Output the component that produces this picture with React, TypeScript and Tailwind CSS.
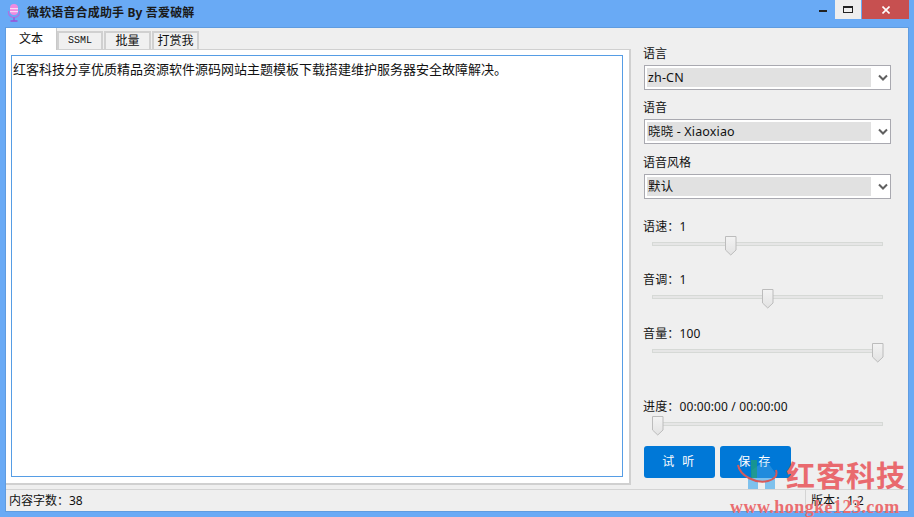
const font = "font-['Noto_Sans','Noto_Sans_CJK_SC',sans-serif]";

const tabs = [
  { label: "SSML", width: "w-[46px]", mono: true },
  { label: "批量", width: "w-[47px]", mono: false },
  { label: "打赏我", width: "w-[47px]", mono: false },
];

function MicIcon() {
  return (
    <svg width="14" height="18" viewBox="0 0 14 18">
      <rect x="3" y="0" width="8" height="11" rx="4" fill="#f08ae0" />
      <rect x="3" y="4" width="8" height="1.2" fill="#fbd8f5" />
      <rect x="3" y="7" width="8" height="1.2" fill="#fbd8f5" />
      <path d="M1.5 7v1.5a5.5 5 0 0 0 11 0V7" fill="none" stroke="#b070e0" strokeWidth="1.2" />
      <path d="M7 13.5V17M3.5 17h7" stroke="#9a50d8" strokeWidth="1.3" fill="none" />
    </svg>
  );
}

function SelectBox({ label, value, top }: { label: string; value: string; top: string }) {
  return (
    <div className={`flex flex-col ${top}`}>
      <div className="h-[20px] text-[12px] leading-[18px] text-[#111]">{label}</div>
      <div className="ml-px flex h-[25px] w-[247px] items-center border border-[#a9a9b0] bg-white pl-[2px]">
        <div className="h-[19px] w-[224px] bg-[#e1e1e1] pl-px text-[12.5px] leading-[19px] tracking-[0.15px] text-[#111]">{value}</div>
        <svg width="10" height="8" viewBox="0 0 10 8" className="ml-[7px]">
          <path d="M1 1.5l4 4 4-4" fill="none" stroke="#606060" strokeWidth="2" />
        </svg>
      </div>
    </div>
  );
}

function Slider({ label, offset, gap }: { label: string; offset: number; gap: string }) {
  return (
    <div className={`flex flex-col ${gap}`}>
      <div className="h-[18px] text-[12px] leading-[18px] tracking-[0.13px] text-[#111]">{label}</div>
      <div className="relative ml-[9px] mt-[6px] h-[4px] w-[231px] border border-[#d6d9d6] bg-[#e6e6e6]">
        <svg
          width="12"
          height="20"
          viewBox="0 0 12 20"
          className="absolute top-[-7px]"
          style={{ left: offset - 1 }}
        >
          <defs>
            <linearGradient id="thumb" x1="0" y1="0" x2="0" y2="1">
              <stop offset="0" stopColor="#f3f3f3" />
              <stop offset="1" stopColor="#e2e2e2" />
            </linearGradient>
          </defs>
          <path d="M.5.5h10.5v13.5L5.75 19 .5 14z" fill="url(#thumb)" stroke="#bcbcbc" />
        </svg>
      </div>
    </div>
  );
}

function Watermark() {
  return (
    <div className="pointer-events-none absolute left-[730px] top-[458px] h-[59px] w-[184px]">
      <svg width="44" height="32" viewBox="0 0 44 32" className="absolute left-[6px] top-0">
        {/* the upper part of the logo barely shows on the blue button */}
        <path d="M16 20V12L30 2l10 14h-1v4z" fill="#6ab8ec" opacity="0.3" />
        <path d="M12 31V20h27v11H29V23h-7v8z" fill="#6ab8ec" opacity="0.85" />
        <rect x="15" y="2" width="6" height="18" fill="#1f9d7a" opacity="0.75" />
        <path d="M2 7c2 11 18 19 30 16 6-1.500 10-5 8-11" fill="none" stroke="#d65a5a" strokeWidth="2" />
      </svg>
      <div className="absolute left-[56px] top-[-2px] whitespace-nowrap font-['Noto_Sans_CJK_SC',sans-serif] text-[29px] font-bold leading-[36px] tracking-[1px] text-[#e96a6e]">
        红客科技
      </div>
      <div className="absolute left-0 top-[40px] whitespace-nowrap font-['Liberation_Serif',serif] text-[18px] font-bold leading-[18px] tracking-[0.45px] text-[#ea6d70]">
        www.hongke123.com
      </div>
    </div>
  );
}

export default function App() {
  return (
    <div className={`relative flex h-[517px] w-[914px] flex-col overflow-hidden bg-[#69aaf5] px-[5px] pb-[5px] ${font}`}>
      {/* title bar */}
      <div className="flex h-[27px] shrink-0 items-start">
        <div className="ml-[2px] mt-[4px] flex items-center">
          <MicIcon />
          <span className="ml-[6px] text-[12px] font-bold leading-[16px] tracking-[0.15px] text-[#1a1a1a]">微软语音合成助手 By 吾爱破解</span>
        </div>
        <div className="ml-auto flex h-[19px] items-start">
          <div className="flex h-[19px] w-[26px] items-center justify-center pb-[1px]">
            <div className="mt-[4px] h-[2px] w-[8px] bg-[#222]" />
          </div>
          <div className="ml-[-1px] flex h-[19px] w-[26px] items-center justify-center bg-[#eeeeee]">
            <div className="h-[7px] w-[10px] border border-t-2 border-[#222]" />
          </div>
          <div className="ml-px flex h-[19px] w-[47px] items-center justify-center bg-[#c75050]">
            <svg width="8" height="8" viewBox="0 0 8 8">
              <path d="M.5.5l7 7M7.5.5l-7 7" stroke="#fff" strokeWidth="1.6" />
            </svg>
          </div>
        </div>
      </div>

      {/* client area */}
      <div className="flex min-h-0 flex-1 flex-col border border-[#5f9ce0] bg-[#efefef]">
        <div className="flex min-h-0 flex-1">
          {/* left: tabs */}
          <div className="flex w-[625px] shrink-0 flex-col">
            <div className="z-10 flex h-[21px] items-end gap-px">
              <div className="mb-[-1px] mr-[-1px] h-[22px] w-[51px] border-r border-[#c8c8c8] bg-white text-center text-[12px] leading-[22px] text-[#111]">文本</div>
              {tabs.map((t) => (
                <div
                  key={t.label}
                  className={`${t.width} h-[18px] border-2 border-b-0 border-[#d0d0d0] bg-[#f0f0f0] text-center leading-[16px] text-[#111] ${t.mono ? "font-['Liberation_Mono',monospace] text-[10px]" : "text-[12px]"}`}
                >
                  {t.label}
                </div>
              ))}
            </div>
            <div className="flex h-[436px] border-2 border-l-0 border-t border-[#d0d0d0] bg-white">
              <div className="ml-[5px] mr-[6px] mt-[5px] mb-[6px] flex-1 border border-[#569de5] bg-white px-px pt-[4px] text-[13px] leading-[18px] text-[#111]">
                红客科技分享优质精品资源软件源码网站主题模板下载搭建维护服务器安全故障解决。
              </div>
            </div>
          </div>

          {/* right: settings */}
          <div className="ml-[12px] flex flex-1 flex-col pt-[17px]">
            <SelectBox label="语言" value="zh-CN" top="" />
            <SelectBox label="语音" value="晓晓 - Xiaoxiao" top="mt-[9px]" />
            <SelectBox label="语音风格" value="默认" top="mt-[10px]" />
            <Slider label="语速：1" offset={73} gap="mt-[19px]" />
            <Slider label="音调：1" offset={110} gap="mt-[25px]" />
            <Slider label="音量：100" offset={220} gap="mt-[26px]" />
            <Slider label="进度：00:00:00 / 00:00:00" offset={0} gap="mt-[45px]" />
            <div className="ml-px mt-[20px] flex gap-[5px]">
              <button className="h-[32px] w-[71px] rounded-[3px] bg-[#0078d7] text-[12px] tracking-[2.5px] text-white">试 听</button>
              <button className="h-[32px] w-[71px] rounded-[3px] bg-[#0078d7] text-[12px] tracking-[2.5px] text-white">保 存</button>
            </div>
          </div>
        </div>

        {/* status bar */}
        <div className="mt-[4px] flex h-[22px] shrink-0 items-center border-t border-[#d4d4d4] text-[12px] text-[#111]">
          <span className="ml-[3px]">内容字数：38</span>
          <span className="ml-auto h-full w-[103px] border-l border-[#d4d4d4] pl-[5px] leading-[22px]">版本：1.2</span>
        </div>
      </div>

      <Watermark />
    </div>
  );
}
